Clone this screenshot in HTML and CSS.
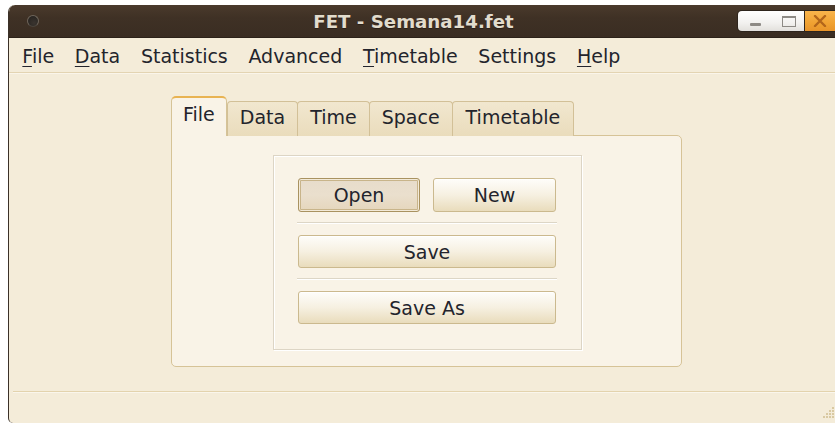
FILE: index.html
```html
<!DOCTYPE html>
<html lang="en">
<head>
<meta charset="utf-8">
<title>FET - Semana14.fet</title>
<link rel="stylesheet" href="styles.css">
</head>
<body>
<div class="window">
  <header class="titlebar">
    <div class="tb-left"><span class="win-menu"></span></div>
    <div class="title">FET - Semana14.fet</div>
    <div class="controls">
      <div class="ctl-pair">
        <span class="ctl-min"></span>
        <span class="ctl-max"></span>
      </div>
      <div class="ctl-close">
        <svg width="14" height="12" viewBox="0 0 14 12"><path d="M2 1 L12 11 M12 1 L2 11" stroke="#b2651a" stroke-width="2.4" stroke-linecap="round"/></svg>
      </div>
    </div>
  </header>

  <nav class="menubar">
    <span class="menu-item"><u>F</u>ile</span>
    <span class="menu-item"><u>D</u>ata</span>
    <span class="menu-item">Statistics</span>
    <span class="menu-item">Advanced</span>
    <span class="menu-item"><u>T</u>imetable</span>
    <span class="menu-item">Settings</span>
    <span class="menu-item"><u>H</u>elp</span>
  </nav>

  <main class="client">
    <div class="tabwidget">
      <div class="tabbar">
        <span class="tab active">File</span>
        <span class="tab">Data</span>
        <span class="tab">Time</span>
        <span class="tab">Space</span>
        <span class="tab">Timetable</span>
      </div>
      <div class="panel">
        <div class="group">
          <div class="row">
            <button class="btn pressed">Open</button>
            <button class="btn">New</button>
          </div>
          <div class="sep"></div>
          <button class="btn wide">Save</button>
          <div class="sep"></div>
          <button class="btn wide">Save As</button>
        </div>
      </div>
    </div>
  </main>

  <footer class="statusbar">
    <svg class="grip" width="14" height="14" viewBox="0 0 14 14">
      <g fill="#d9c9a2">
        <rect x="11" y="2" width="2" height="2"/>
        <rect x="8" y="5" width="2" height="2"/><rect x="11" y="5" width="2" height="2"/>
        <rect x="5" y="8" width="2" height="2"/><rect x="8" y="8" width="2" height="2"/><rect x="11" y="8" width="2" height="2"/>
        <rect x="2" y="11" width="2" height="2"/><rect x="5" y="11" width="2" height="2"/><rect x="8" y="11" width="2" height="2"/><rect x="11" y="11" width="2" height="2"/>
      </g>
    </svg>
  </footer>
</div>
</body>
</html>
```

FILE: styles.css
```css
html, body {
  margin: 0;
  padding: 0;
  background: #ffffff;
  height: 423px;
  overflow: hidden;
}

body {
  font-family: "DejaVu Sans", "Liberation Sans", sans-serif;
  font-size: 19px;
  color: #23242c;
}

.window {
  margin: 5px 0 0 8px;
  height: 418px;
  background: #f4ecd9;
  border-left: 1px solid #3b3128;
  border-radius: 7px 0 0 5px;
  display: flex;
  flex-direction: column;
  overflow: hidden;
}

/* ---- title bar ---- */
.titlebar {
  height: 32px;
  flex: none;
  display: grid;
  grid-template-columns: 80px 1fr 97px;
  align-items: center;
  background: linear-gradient(#4a3a2c, #3f3125 40%, #3a2d22);
  border-bottom: 1px solid #2c2219;
  border-radius: 6px 0 0 0;
}

.tb-left {
  padding-left: 18px;
  display: flex;
  align-items: center;
}

.win-menu {
  width: 10px;
  height: 10px;
  border-radius: 50%;
  background: radial-gradient(circle at 60% 70%, #3a342f, #2a2622 70%);
  border: 1px solid #6e655b;
  border-bottom-color: #4a433c;
}

.title {
  text-align: center;
  font-weight: bold;
  font-size: 18.2px;
  color: #e2dccd;
  text-shadow: 0 1px 0 #2a2018;
}

.controls {
  display: flex;
  height: 20px;
  align-self: center;
}

.ctl-pair {
  width: 67px;
  display: flex;
  align-items: center;
  background: linear-gradient(#ffffff, #f2f1ef 60%, #e2e0dc);
  border-radius: 4px 0 0 4px;
  box-shadow: 0 0 0 1px #2e251d;
}

.ctl-min {
  width: 11px;
  height: 3px;
  margin-left: 12px;
  margin-top: 6px;
  background: #8d8a85;
  border-radius: 1px;
}

.ctl-max {
  width: 12px;
  height: 8px;
  margin-left: 21px;
  border: 1px solid #8d8a85;
  border-top-width: 2px;
}

.ctl-close {
  width: 30px;
  display: flex;
  align-items: center;
  justify-content: center;
  background: linear-gradient(#f8b44c, #f0a232 60%, #e8942a);
  box-shadow: 0 0 0 1px #2e251d;
}

/* ---- menu bar ---- */
.menubar {
  height: 34px;
  flex: none;
  display: flex;
  align-items: center;
  padding-left: 3px;
  border-bottom: 1px solid #e3d4b2;
  box-shadow: 0 1px 0 #faf5ea;
}

.menu-item {
  padding: 2px 10.35px 0;
  line-height: 22px;
}

.menu-item u {
  text-decoration-thickness: 1px;
  text-underline-offset: 3px;
}

/* ---- central area with tab widget ---- */
.client {
  flex: 1;
  padding: 23px 0 0 162px;
}

.tabwidget {
  width: 511px;
}

.tabbar {
  display: flex;
  align-items: flex-end;
  height: 40px;
  margin-bottom: -1px;
  position: relative;
  z-index: 1;
}

.tab {
  height: 35px;
  box-sizing: border-box;
  padding: 0 12px 4px;
  display: flex;
  align-items: center;
  background: linear-gradient(#f1e7cf, #eadcbc);
  border: 1px solid #d2c097;
  border-bottom: none;
  border-radius: 4px 4px 0 0;
  margin-right: -1px;
}

.tab.active {
  height: 40px;
  padding: 0 11px 6px;
  background: #f9f3e7;
  border-color: #d6c397;
  border-top: 2px solid #e8b352;
  border-radius: 5px 5px 0 0;
  margin-right: 0;
}

.tab:last-child {
  padding: 0 13px 4px;
}

.panel {
  height: 232px;
  box-sizing: border-box;
  background: #f9f3e7;
  border: 1px solid #d6c397;
  border-radius: 0 5px 5px 5px;
  padding: 19px 0 0 101px;
}

.group {
  width: 309px;
  height: 195px;
  box-sizing: border-box;
  border: 1px solid #ddd5c5;
  box-shadow: inset 1px 1px 0 #ffffff, 1px 1px 0 #ffffff;
  padding: 22px 0 0 24px;
  display: flex;
  flex-direction: column;
}

.row {
  display: flex;
  gap: 13px;
}

.btn {
  font-family: inherit;
  font-size: 19px;
  color: #23242c;
  height: 34px;
  width: 123px;
  box-sizing: border-box;
  padding: 0;
  border: 1px solid #cbb98e;
  border-radius: 3px;
  background: linear-gradient(#fefdfa, #f6f0e1 50%, #e9dcbc);
  box-shadow: inset 0 1px 0 #ffffff;
}

.btn.pressed {
  width: 122px;
  border-color: #a99260;
  background: linear-gradient(#e7dccb, #eadfcd 50%, #e5d6bc);
  box-shadow: inset 0 0 0 1px #f3ead9, inset 0 0 0 2px #c8b48a;
}

.btn.wide {
  width: 258px;
  height: 33px;
}

.sep {
  width: 260px;
  height: 1px;
  margin: 10px 0 12px -1px;
  background: #ddd6c6;
  box-shadow: 0 1px 0 #ffffff;
}

/* ---- status bar ---- */
.statusbar {
  height: 31px;
  flex: none;
  border-top: 1px solid #e3d3ad;
  box-shadow: inset 0 1px 0 #faf6ec;
  display: flex;
  justify-content: flex-end;
  align-items: flex-end;
  margin-left: 4px;
}

.grip {
  margin: 0 0 4px 0;
}
```
